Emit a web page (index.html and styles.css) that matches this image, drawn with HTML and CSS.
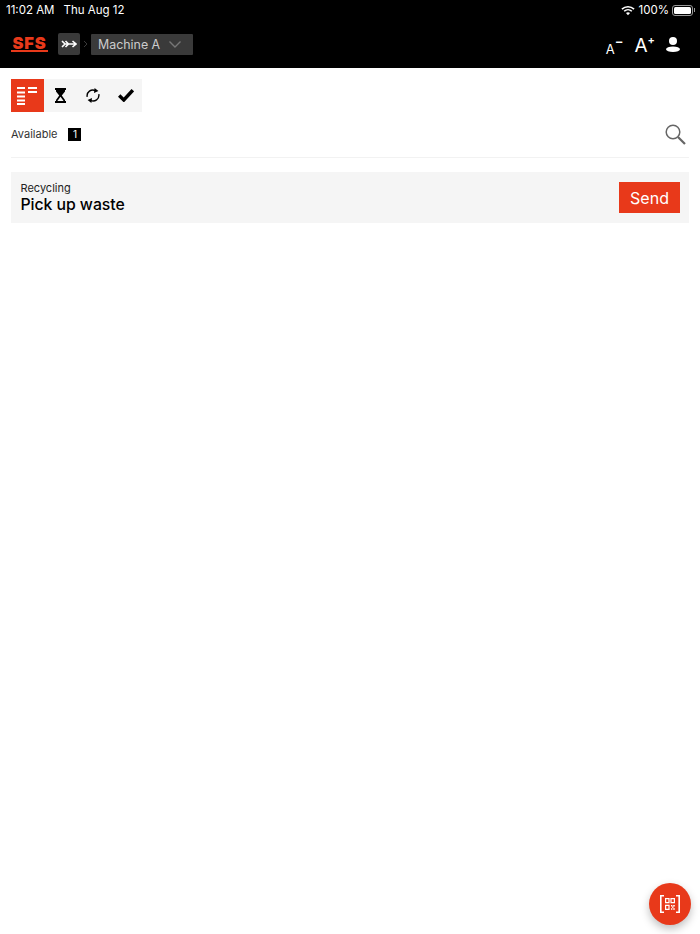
FILE: index.html
```html
<!DOCTYPE html>
<html lang="en">
<head>
    <meta charset="UTF-8">
    <meta name="viewport" content="width=device-width, initial-scale=1.0">
    <title>Tasks</title>
    <link rel="stylesheet" href="styles.css">
</head>
<body>
    <div class="page">
        <header class="header">
            <div class="status-bar">
                <div class="status-left">
                    <span>11:02 AM</span>
                    <span>Thu Aug 12</span>
                </div>
                <div class="status-right">
                    <svg class="wifi" width="14" height="11" viewBox="0 0 15 11">
                        <path d="M1 4 A9.5 9.5 0 0 1 14 4" fill="none" stroke="#fff" stroke-width="1.7"/>
                        <path d="M3.4 6.3 A6 6 0 0 1 11.6 6.3" fill="none" stroke="#fff" stroke-width="1.7"/>
                        <path d="M5.3 8.3 A3.2 3.2 0 0 1 9.7 8.3 L7.5 10.7 Z" fill="#fff"/>
                    </svg>
                    <span>100%</span>
                    <div class="battery"><div class="battery-fill"></div></div>
                    <div class="battery-tip"></div>
                </div>
            </div>
            <div class="nav-bar">
                <div class="nav-left">
                    <div class="logo">SFS</div>
                    <div class="nav-arrow">
                        <svg width="16" height="8" viewBox="0 0 16 8">
                            <path d="M1 1 L4 4 L1 7 M4.5 1 L7.5 4 L4.5 7 M3 4 H14 M11.5 1 L15 4 L11.5 7" fill="none" stroke="#fff" stroke-width="1.6"/>
                        </svg>
                    </div>
                    <svg class="crumb" width="5" height="8" viewBox="0 0 5 8">
                        <path d="M1 1 L4 4 L1 7" fill="none" stroke="#3a3a3a" stroke-width="1"/>
                    </svg>
                    <div class="machine-select">
                        <span>Machine A</span>
                        <svg width="12" height="7" viewBox="0 0 12 7">
                            <path d="M0.5 0.5 L6 6 L11.5 0.5" fill="none" stroke="#777" stroke-width="1.4"/>
                        </svg>
                    </div>
                </div>
                <div class="nav-right">
                    <div class="font-btn font-small">A<sup>&minus;</sup></div>
                    <div class="font-btn font-large">A<sup>+</sup></div>
                    <svg width="14" height="15" viewBox="0 0 14 15">
                        <circle cx="7" cy="4" r="4" fill="#fff"/>
                        <ellipse cx="7" cy="12.2" rx="7" ry="2.8" fill="#fff"/>
                    </svg>
                </div>
            </div>
        </header>

        <main class="content">
            <div class="tabs">
                <div class="tab tab-active">
                    <svg width="20" height="18" viewBox="0 0 20 18">
                        <path d="M0 1 H8 M0 5.5 H8 M0 9.5 H8 M0 13.5 H8 M0 17 H8 M11 1 H20 M11 5 H20" stroke="#fff" stroke-width="2" fill="none"/>
                    </svg>
                </div>
                <div class="tab">
                    <svg width="11" height="15" viewBox="0 0 11 15">
                        <path d="M0 0 H11 V2 H10 V3.5 L6.8 7.5 L10 12 V13 H11 V15 H0 V13 H1 V12 L4.2 7.5 L1 3.5 V2 H0 Z" fill="#000"/>
                        <path d="M2.4 13 L5.5 8.8 L8.6 13 Z" fill="#f5f5f5"/>
                    </svg>
                </div>
                <div class="tab">
                    <svg width="14" height="15" viewBox="0 0 14 15">
                        <path d="M1.2 8.8 A5.8 5.8 0 0 1 9.5 2.6 M12.8 6.2 A5.8 5.8 0 0 1 4.5 12.4" fill="none" stroke="#000" stroke-width="1.4"/>
                        <path d="M8.6 0 L12.4 3 L8 5 Z M5.4 15 L1.6 12 L6 10 Z" fill="#000"/>
                    </svg>
                </div>
                <div class="tab">
                    <svg width="16" height="13" viewBox="0 0 16 13">
                        <path d="M1.2 6.5 L5.8 11 L14.8 1.2" fill="none" stroke="#000" stroke-width="3.4"/>
                    </svg>
                </div>
            </div>

            <div class="filter-row">
                <div class="filter-label">
                    <span>Available</span>
                    <span class="count">1</span>
                </div>
                <svg width="21" height="21" viewBox="0 0 21 21">
                    <circle cx="8" cy="8" r="6.8" fill="none" stroke="#666" stroke-width="1.5"/>
                    <path d="M13 13 L20 20" stroke="#666" stroke-width="2.2"/>
                </svg>
            </div>

            <div class="task-card">
                <div class="task-text">
                    <div class="task-category">Recycling</div>
                    <div class="task-title">Pick up waste</div>
                </div>
                <button class="send-btn">Send</button>
            </div>
        </main>

        <button class="scan-btn">
            <svg width="20" height="18" viewBox="0 0 20 18">
                <path d="M4 0.8 H0.8 V17.2 H4 M16 0.8 H19.2 V17.2 H16" fill="none" stroke="#fff" stroke-width="1.6"/>
                <path d="M5.6 3.6 H9 V7.6 H5.6 Z M11 3.6 H14.4 V7.6 H11 Z M5.6 10.4 H9 V14.4 H5.6 Z" fill="none" stroke="#fff" stroke-width="1.2"/>
                <path d="M11 10 H12.4 V11.4 H11 Z M13.2 10 H14.8 V11.4 H13.2 Z M12.2 11.6 H13.4 V13 H12.2 Z M11 13.2 H12.4 V14.8 H11 Z M13.2 13.2 H14.8 V14.8 H13.2 Z" fill="#fff"/>
            </svg>
        </button>
    </div>
</body>
</html>
```

FILE: styles.css
```css
html, body {
    margin: 0;
    padding: 0;
}
body {
    font-family: 'Inter', 'Liberation Sans', sans-serif;
    background: #fff;
    color: #000;
}
.page {
    position: relative;
    width: 700px;
    height: 934px;
    overflow: hidden;
}

/* Header */
.header {
    height: 68px;
    background: #000;
    color: #fff;
}
.status-bar {
    display: flex;
    justify-content: space-between;
    align-items: center;
    height: 20px;
    padding: 0 5px 0 6px;
    font-size: 11.5px;
}
.status-left {
    display: flex;
    gap: 9px;
}
.status-right {
    display: flex;
    align-items: center;
    gap: 4px;
}
.battery {
    width: 17px;
    height: 7px;
    border: 1px solid #999;
    border-radius: 3px;
    padding: 1px;
    margin-left: -1px;
}
.battery-fill {
    width: 100%;
    height: 100%;
    background: #fff;
    border-radius: 1.5px;
}
.battery-tip {
    width: 1px;
    height: 4px;
    background: #999;
    margin-left: -3px;
}
.nav-bar {
    display: flex;
    justify-content: space-between;
    align-items: center;
    height: 48px;
    padding: 0 20px 0 11px;
}
.nav-left {
    display: flex;
    align-items: center;
}
.logo {
    width: 37px;
    margin-right: 10px;
    font-size: 16.5px;
    font-weight: 900;
    letter-spacing: 0.8px;
    line-height: 13px;
    color: #e8391a;
    text-align: center;
    white-space: nowrap;
    border-bottom: 2px solid #e8391a;
}
.nav-arrow {
    display: flex;
    align-items: center;
    justify-content: center;
    width: 22px;
    height: 22px;
    background: #3a3a3a;
    border-radius: 2px;
}
.crumb {
    margin: 0 3px;
}
.machine-select {
    display: flex;
    align-items: center;
    justify-content: space-between;
    box-sizing: border-box;
    width: 102px;
    height: 21px;
    padding: 0 12px 0 7px;
    background: #3a3a3a;
    border-radius: 1px;
    color: #ccc;
    font-size: 12.4px;
}
.nav-right {
    display: flex;
    align-items: center;
    gap: 11px;
}
.font-btn {
    line-height: 1;
}
.font-btn sup {
    line-height: 0;
    font-weight: 600;
}
.font-small {
    font-size: 13px;
    margin-top: 8px;
}
.font-small sup {
    font-size: 13px;
    vertical-align: 8px;
}
.font-large {
    font-size: 19px;
    margin-top: 2px;
}
.font-large sup {
    font-size: 11px;
    vertical-align: 8px;
}

/* Content */
.content {
    padding: 11px 11px 0;
}
.tabs {
    display: flex;
    width: 131px;
    background: #f5f5f5;
}
.tab {
    display: flex;
    flex: none;
    align-items: center;
    justify-content: center;
    width: 32.75px;
    height: 33px;
}
.tab-active {
    background: #e8391a;
}
.filter-row {
    display: flex;
    justify-content: space-between;
    align-items: center;
    height: 45px;
    padding-right: 3px;
    border-bottom: 1px solid #f2f2f2;
}
.filter-label {
    display: flex;
    align-items: center;
    gap: 11px;
    font-size: 11px;
    color: #333;
    margin-top: -1px;
}
.count {
    width: 13px;
    height: 13px;
    background: #000;
    color: #fff;
    font-size: 10px;
    line-height: 13px;
    text-align: center;
}
.task-card {
    display: flex;
    justify-content: space-between;
    align-items: center;
    height: 51px;
    margin-top: 14px;
    padding: 0 9px;
    background: #f5f5f5;
}
.task-text {
    padding: 1px 0 0 0.5px;
}
.task-category {
    font-size: 11px;
    line-height: 13px;
    color: #222;
}
.task-title {
    font-size: 15.8px;
    line-height: 20px;
    font-weight: 450;
    letter-spacing: -0.05px;
}
.send-btn {
    width: 61px;
    height: 31px;
    padding: 0;
    border: none;
    background: #e8391a;
    color: #fff;
    font-family: inherit;
    font-size: 16px;
}

/* Floating scan button */
.scan-btn {
    position: absolute;
    left: 649px;
    top: 883px;
    display: flex;
    align-items: center;
    justify-content: center;
    width: 42px;
    height: 42px;
    padding: 0;
    border: none;
    border-radius: 50%;
    background: #e8391a;
    box-shadow: 0 4px 8px rgba(0, 0, 0, 0.25);
}
```
